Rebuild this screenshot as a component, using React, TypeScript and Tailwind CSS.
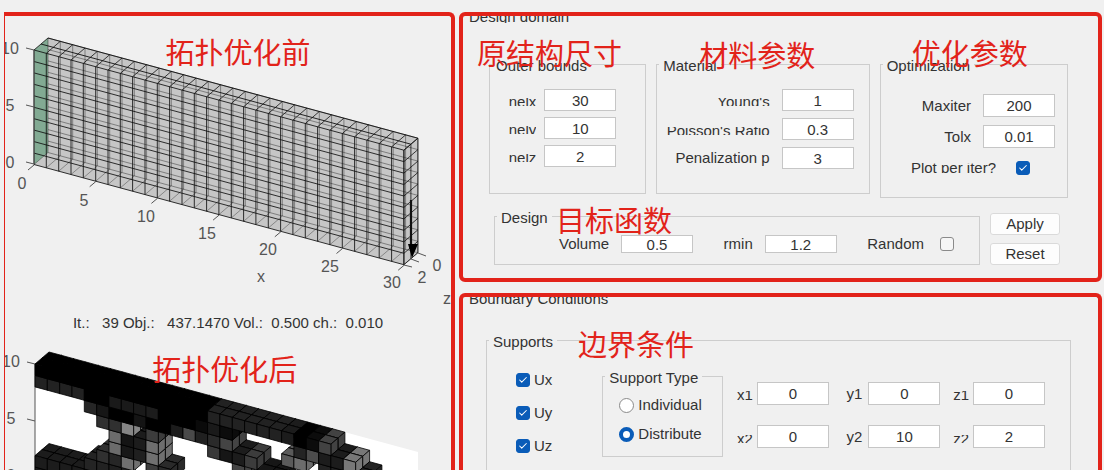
import type { ReactNode } from 'react';
import { Check } from 'lucide-react';

type Clip = 'none' | 'tight' | 'top';

const clipClass: Record<Clip, string> = {
  none: 'leading-5',
  tight: 'mt-1 h-2 overflow-hidden leading-2',
  top: 'mt-1 h-[10px] overflow-hidden leading-2',
};

function Note({ children, className }: { children: ReactNode; className: string }) {
  return <p className={`pointer-events-none absolute z-10 whitespace-nowrap font-['Noto_Sans_CJK_SC',sans-serif] text-[29px] font-normal leading-8 text-[#e2231a] ${className}`}>{children}</p>;
}

function Group({ title, className, children }: { title: string; className?: string; children: ReactNode }) {
  return <fieldset className={`relative min-w-0 border border-[#cdcdcd] ${className ?? ''}`}>
    <legend className="ml-[2px] whitespace-nowrap px-1 pt-1 leading-4">{title}</legend>
    {children}
  </fieldset>;
}

function Field({ id, label, value, clip = 'none', gap = 'gap-2', height = 'h-[22px]' }: { id: string; label: string; value: string; clip?: Clip; gap?: string; height?: string }) {
  return <div className={`flex items-center justify-end ${gap} ${height}`}>
    <label htmlFor={id} className={`whitespace-nowrap ${clipClass[clip]}`}>{label}</label>
    <input id={id} type="text" defaultValue={value} className="h-full w-[72px] shrink-0 border border-[#c6c6c6] bg-white text-center outline-none" />
  </div>;
}

function Tick({ id, checked }: { id: string; checked?: boolean }) {
  return <span className="grid h-[14px] w-[14px] shrink-0 place-items-center">
    <input id={id} type="checkbox" defaultChecked={checked} className="peer col-start-1 row-start-1 h-[14px] w-[14px] appearance-none rounded-[3px] border border-[#8a8a8a] bg-[#f6f6f6] checked:border-[#0a5cb8] checked:bg-[#0a5cb8]" />
    <Check className="pointer-events-none invisible z-10 col-start-1 row-start-1 h-[10px] w-[10px] text-white peer-checked:visible" strokeWidth={2.5} />
  </span>;
}

function Radio({ id, label, checked }: { id: string; label: string; checked?: boolean }) {
  return <div className="flex items-center gap-1">
    <input id={id} name="support-type" type="radio" defaultChecked={checked} className="h-[15px] w-[15px] shrink-0 appearance-none rounded-full border border-[#8a8a8a] bg-white checked:border-4 checked:border-[#0a5cb8]" />
    <label htmlFor={id} className="leading-5">{label}</label>
  </div>;
}

// one element of the mesh, in plot units
const DX = 12.33;
const SLOPE = 3.34;
const DY = 11.45;
const DEPTH = [7, -6];

function pt(ox: number, oy: number, i: number, r: number, k: number) {
  return `${(ox + i * DX + k * DEPTH[0]).toFixed(1)},${(oy + i * SLOPE + r * DY + k * DEPTH[1]).toFixed(1)}`;
}

function range(n: number) {
  return Array.from({ length: n }, (_, i) => i);
}

function Mesh() {
  const p = (i: number, r: number, k: number) => pt(34, 50, i, r, k);
  const layer = (k: number) => [
    ...range(31).map(i => `M${p(i, 0, k)}L${p(i, 10, k)}`),
    ...range(11).map(r => `M${p(0, r, k)}L${p(30, r, k)}`),
  ].join('');
  const top = range(31).map(i => `M${p(i, 0, 0)}L${p(i, 0, 2)}`).join('');
  const bottom = range(31).map(i => `M${p(i, 10, 0)}L${p(i, 10, 2)}`).join('');
  const side = [
    ...range(11).map(r => `M${p(30, r, 0)}L${p(30, r, 2)}`),
    ...range(3).map(k => `M${p(30, 0, k)}L${p(30, 10, k)}`),
  ].join('');
  return <g fill="none" stroke="#111">
    <polygon points={[p(0, 0, 0), p(0, 0, 2), p(30, 0, 2), p(30, 10, 2), p(30, 10, 0), p(0, 10, 0)].join(' ')} fill="#c6c6c6" stroke="none" />
    <polygon points={[p(0, 0, 0), p(0, 0, 2), p(0, 10, 2), p(0, 10, 0)].join(' ')} fill="#82aa93" stroke="none" />
    <path d={layer(2)} strokeWidth=".8" opacity=".5" />
    <path d={bottom} strokeWidth=".7" opacity=".5" />
    <path d={`M${p(0, 0, 1)}L${p(30, 0, 1)}M${p(0, 0, 2)}L${p(30, 0, 2)}`} strokeWidth=".9" />
    <path d={top + side} strokeWidth=".8" />
    <path d={layer(0)} strokeWidth="1" opacity=".85" />
    <path d="M411 200V248" strokeWidth="2.2" />
    <path d="M408 244l10 0-6 14z" fill="#000" stroke="none" />
  </g>;
}

// grey level of each element from the given row down: [column, first row, shades]
const columns: [number, number, string[]][] = [
  [0, 0, ['#000', '#222']], [1, 0, ['#000', '#222']], [2, 0, ['#000', '#222']], [3, 0, ['#000', '#222']],
  [4, 0, ['#000', '#000', '#262626']],
  [5, 0, ['#000', '#000', '#161616', '#303030']],
  [6, 0, ['#000', '#1a1a1a', '#000', '#303030', '#6c6c6c', '#6c6c6c', '#262626', '#202020', '#202020']],
  [7, 0, ['#000', '#1a1a1a', '#000', '#858585', '#141414', '#181818', '#707070']],
  [8, 0, ['#000', '#1a1a1a', '#141414', '', '#1c1c1c', '#202020']],
  [9, 0, ['#000', '#1c1c1c', '#000', '#3c3c3c', '#6e6e6e', '#707070', '#3c3c3c']],
  [10, 0, ['#000', '#000', '#000', '', '', '', '#2a2a2a']],
  [11, 0, ['#000', '#000', '#1c1c1c']],
  [12, 0, ['#000', '#000', '#4a4a4a']],
  [13, 0, ['#000', '#0a0a0a', '#202020']],
  [14, 0, ['#222', '#1a1a1a', '#2a2a2a', '#383838']],
  [15, 0, ['#222', '#0c0c0c', '#444', '#161616']],
  [16, 0, ['#222', '', '', '#1c1c1c', '#444']],
  [17, 0, ['#222', '', '', '#3c3c3c']],
  [18, 0, ['#222', '', '', '', '#161616']],
  [19, 0, ['#222', '', '', '', '#161616']],
  [20, 0, ['#1c1c1c', '', '#5a5a5a']],
  [21, 0, ['#000', '#242424', '#6c6c6c']],
  [22, 0, ['#0c0c0c', '#4c4c4c', '']],
  [23, 0, ['#424242', '#1c1c1c', '#222']],
  [24, 0, ['', '#1c1c1c', '#222']],
  [25, 0, ['', '#787878', '#222']],
  [26, 0, ['', '', '#242424']],
  [0, 8, ['#1c1c1c', '#1c1c1c']], [1, 8, ['#1c1c1c', '#1c1c1c']], [2, 8, ['#1c1c1c', '#1c1c1c']], [3, 8, ['#1c1c1c', '#1c1c1c']],
  [4, 7, ['#242424', '#1c1c1c']],
  [5, 6, ['#303030', '#222', '#1c1c1c']],
];

function Voxels() {
  const p = (i: number, r: number, k: number) => pt(35, 364, i, r, k);
  const cells = columns
    .flatMap(([i, start, shades]) => shades.map((shade, n) => ({ i, r: start + n, shade })))
    .filter(c => c.shade)
    .sort((a, b) => a.i - b.i || b.r - a.r);
  return <g stroke="#000" strokeWidth=".8" strokeLinejoin="round">
    {[1, 0].map(k => <g key={k}>
      {cells.map(({ i, r, shade }) => <g key={`${i}-${r}`} fill={shade}>
        <polygon points={[p(i, r, k), p(i, r, k + 1), p(i + 1, r, k + 1), p(i + 1, r, k)].join(' ')} />
        <polygon points={[p(i + 1, r, k), p(i + 1, r, k + 1), p(i + 1, r + 1, k + 1), p(i + 1, r + 1, k)].join(' ')} />
        <polygon points={[p(i, r, k), p(i + 1, r, k), p(i + 1, r + 1, k), p(i, r + 1, k)].join(' ')} />
      </g>)}
    </g>)}
  </g>;
}

const xTicks: [string, number, number][] = [
  ['0', 22, 189], ['5', 84, 206], ['10', 146, 222], ['15', 207, 239], ['20', 268, 255], ['25', 330, 272], ['30', 392, 288],
];

function Plots() {
  return <section className="relative ml-1 mt-3 overflow-hidden rounded-tr-md border-l border-r-4 border-t-4 border-[#e2231a]">
    <Note className="left-[36%] top-[19px]">拓扑优化前</Note>
    <svg viewBox="5 16 446 294" className="block w-full overflow-visible" fontSize="16" fill="#555" textAnchor="middle" role="img" aria-label="Initial mesh">
      <Mesh />
      <path d="M34 50V164M34 50l-8-2M34 107l-8-2M34 164l-8-2M418 253l8 3M411 259l8 3M404 265l8 2" stroke="#555" fill="none" />
      {xTicks.map(([t, x, y], n) => <g key={t}>
        <path d={`M${34 + n * 61.7} ${165 + n * 16.7}l-6 5`} stroke="#555" />
        <text x={x} y={y}>{t}</text>
      </g>)}
      <text x="10" y="54">10</text><text x="10" y="111">5</text><text x="10" y="168">0</text>
      <text x="422" y="283">2</text><text x="437" y="271">0</text>
      <text x="261" y="282">x</text><text x="447" y="304">z</text>
    </svg>
    <p className="whitespace-pre text-center leading-[26px]">{'It.:   39 Obj.:   437.1470 Vol.:  0.500 ch.:  0.010'}</p>
    <div className="relative">
      <Note className="left-[33%] top-[16px]">拓扑优化后</Note>
      <svg viewBox="5 336 446 134" className="block w-full overflow-visible" fontSize="16" fill="#555" textAnchor="middle" role="img" aria-label="Optimized structure">
        <polygon points="35,364 49,352 418,452 418,480 35,480" fill="#fff" />
        <path d="M35 364V480M35 364l-8-2M35 421l-8-2" stroke="#555" fill="none" />
        <Voxels />
        <text x="11" y="367">10</text><text x="11" y="424">5</text><text x="11" y="481">0</text>
      </svg>
    </div>
  </section>;
}

function DesignDomain() {
  return <section className="overflow-hidden rounded-md border-4 border-[#e2231a] pb-[13px]">
    <h2 className="ml-[6px] h-[7px] overflow-hidden leading-[2px]">Design domain</h2>
    <div className="ml-[26px] mr-[30px] mt-[31px] grid grid-cols-[157fr_213fr_188fr] items-start gap-[10px]">
      <Group title="Outer bounds" className="pb-[26px]">
        <Note className="-left-[13px] -top-[38px]">原结构尺寸</Note>
        <div className="grid gap-[6px] pr-[29px] pt-[15px]">
          <Field id="nelx" label="nelx" value="30" clip="tight" />
          <Field id="nely" label="nely" value="10" clip="tight" />
          <Field id="nelz" label="nelz" value="2" clip="tight" />
        </div>
      </Group>
      <Group title="Material" className="pb-6">
        <Note className="-top-[36px] left-[42px]">材料参数</Note>
        <div className="grid gap-[7px] pr-[15px] pt-[15px]">
          <Field id="young" label="Young's" value="1" clip="tight" gap="gap-3" />
          <Field id="poisson" label="Poisson's Ratio" value="0.3" clip="tight" gap="gap-3" />
          <Field id="penal" label="Penalization p" value="3" gap="gap-3" />
        </div>
      </Group>
      <Group title="Optimization" className="pb-[18px]">
        <Note className="-top-[38px] left-[31px]">优化参数</Note>
        <div className="grid gap-2 pr-[12px] pt-5">
          <Field id="maxiter" label="Maxiter" value="200" gap="gap-3" height="h-[23px]" />
          <Field id="tolx" label="Tolx" value="0.01" gap="gap-3" height="h-[23px]" />
          <div className="flex h-[23px] items-center justify-end gap-5 pr-[25px]">
            <label htmlFor="plot" className="h-[10px] overflow-hidden whitespace-nowrap leading-[10px]">Plot per iter?</label>
            <Tick id="plot" checked />
          </div>
        </div>
      </Group>
    </div>
    <div className="ml-[31px] mr-[38px] mt-2 flex items-end gap-[10px]">
      <Group title="Design" className="flex-1 pb-[11px]">
        <Note className="-top-[23px] left-[61px]">目标函数</Note>
        <div className="flex items-center justify-between pl-16 pr-[25px] pt-[9px]">
          <Field id="volume" label="Volume" value="0.5" gap="gap-3" height="h-[18px]" />
          <Field id="rmin" label="rmin" value="1.2" gap="gap-3" height="h-[18px]" />
          <div className="flex h-[18px] items-center gap-4">
            <label htmlFor="random">Random</label>
            <Tick id="random" />
          </div>
        </div>
      </Group>
      <div className="grid w-[70px] gap-2">
        <button type="button" className="h-[22px] rounded-[3px] border border-[#dadada] bg-[#fdfdfd] leading-5">Apply</button>
        <button type="button" className="h-[22px] rounded-[3px] border border-[#dadada] bg-[#fdfdfd] leading-5">Reset</button>
      </div>
    </div>
  </section>;
}

function BoundaryConditions() {
  return <section className="flex-1 overflow-hidden rounded-t-md border-4 border-b-0 border-[#e2231a]">
    <h2 className="ml-[6px] h-[10px] overflow-hidden leading-1">Boundary Conditions</h2>
    <Group title="Supports" className="ml-[23px] mr-[27px] mt-[23px] h-[180px]">
      <Note className="-top-[23px] left-[91px]">边界条件</Note>
      <div className="flex items-start pl-[29px] pr-[25px] pt-4">
        <div className="mt-[4px] grid gap-[13px]">
          {['Ux', 'Uy', 'Uz'].map(name => <div key={name} className="flex items-center gap-1">
            <Tick id={name} checked />
            <label htmlFor={name} className="leading-5">{name}</label>
          </div>)}
        </div>
        <Group title="Support Type" className="ml-[50px] w-[121px] pb-3">
          <div className="grid gap-[9px] pl-4 pt-[9px]">
            <Radio id="individual" label="Individual" />
            <Radio id="distribute" label="Distribute" checked />
          </div>
        </Group>
        <div className="mt-[16px] grid flex-1 grid-cols-[106fr_112fr_105fr] gap-y-5">
          <Field id="x1" label="x1" value="0" clip="top" gap="gap-1" height="h-[23px]" />
          <Field id="y1" label="y1" value="0" gap="gap-[6px]" height="h-[23px]" />
          <Field id="z1" label="z1" value="0" clip="top" gap="gap-1" height="h-[23px]" />
          <Field id="x2" label="x2" value="0" clip="tight" gap="gap-1" height="h-[23px]" />
          <Field id="y2" label="y2" value="10" gap="gap-[6px]" height="h-[23px]" />
          <Field id="z2" label="z2" value="2" clip="tight" gap="gap-1" height="h-[23px]" />
        </div>
      </div>
    </Group>
  </section>;
}

export default function App() {
  return <main className="grid h-screen grid-cols-[455fr_649fr] overflow-hidden bg-[#f0f0f0] font-['Liberation_Sans',Arial,sans-serif] text-[15px] text-[#333]">
    <Plots />
    <div className="ml-1 mr-[2px] mt-3 flex min-h-0 flex-col gap-[11px]">
      <DesignDomain />
      <BoundaryConditions />
    </div>
  </main>;
}
